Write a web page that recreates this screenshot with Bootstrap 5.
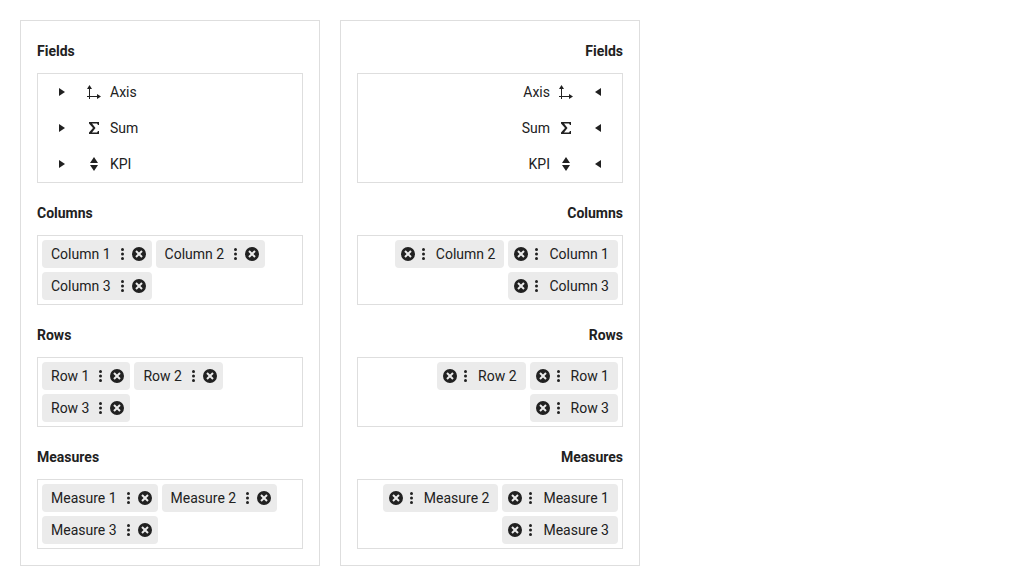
<!DOCTYPE html>
<html lang="en">
<head>
<meta charset="utf-8">
<meta name="viewport" content="width=device-width, initial-scale=1">
<title>Pivot grid configurator</title>
<link href="https://cdn.jsdelivr.net/npm/bootstrap@5.3.0/dist/css/bootstrap.min.css" rel="stylesheet">
<style>
  body { font-family: Roboto, "Liberation Sans", sans-serif; font-size: 14px; line-height: 20px; color: #212121; background: #fff; }
  .page { gap: 20px; padding: 20px; }
  .configurator { flex: 0 1 300px; border: 1px solid #dedede; }
  .heading { font-size: 14px; line-height: 28px; font-weight: 700; }
  .box { border: 1px solid #dedede; }
  .field { height: 36px; padding-inline: 16px; }
  .glyph { display: block; flex: none; width: 16px; height: 16px; fill: currentColor; }
  .plain { padding: 0; border: 0; background: none; color: inherit; }
  .toggle { margin-inline-end: 16px; }
  [dir=rtl] .toggle .glyph { transform: scaleX(-1); }
  .chip { height: 28px; padding-inline: 9px 5px; border-radius: 4px; background: #ebebeb; }
  .chip-label { margin-inline-end: 4px; }
</style>
</head>
<body>
<svg class="d-none" aria-hidden="true">
  <symbol id="caret" viewBox="0 0 16 16"><path d="M5 4v8l6-4z"/></symbol>
  <symbol id="axis" viewBox="0 0 16 16"><path d="M3 5H1l2.500-4L6 5H4v7h7v-2l4 2.500L11 15v-2H4v2H3v-2H1v-1h2z"/></symbol>
  <symbol id="sum" viewBox="0 0 16 16"><path d="M3 2h10v3h-1l-1-1.500H6L9.500 8 6 12.500h5l1-1.500h1v3H3v-1.500L7 8 3 3.500z"/></symbol>
  <symbol id="kpi" viewBox="0 0 16 16"><path d="M8 1l4 6H4zM4 9h8l-4 6z"/></symbol>
  <symbol id="more" viewBox="0 0 16 16"><circle cx="7.500" cy="3.500" r="1.500"/><circle cx="7.500" cy="8" r="1.500"/><circle cx="7.500" cy="12.500" r="1.500"/></symbol>
  <symbol id="remove" viewBox="0 0 16 16"><path fill-rule="evenodd" d="M8 1a7 7 0 1 0 0 14A7 7 0 0 0 8 1zM5.700 4.300 8 6.600l2.300-2.300 1.400 1.400L9.400 8l2.300 2.300-1.400 1.400L8 9.400l-2.300 2.300-1.400-1.400L6.600 8 4.300 5.700z"/></symbol>
</svg>

<main class="page d-flex align-items-start" id="page"></main>

<script src="https://cdn.jsdelivr.net/npm/bootstrap@5.3.0/dist/js/bootstrap.bundle.min.js"></script>
<script>
  const glyph = id => `<svg class="glyph" aria-hidden="true"><use href="#${id}"/></svg>`;

  const field = ([name, icon]) => `
    <li class="field d-flex align-items-center">
      <button type="button" class="plain toggle" aria-label="Expand ${name}">${glyph('caret')}</button>
      <span class="d-flex align-items-center gap-2">${glyph(icon)}<span>${name}</span></span>
    </li>`;

  const chip = name => `
    <li class="chip d-flex align-items-center">
      <span class="chip-label">${name}</span>
      <button type="button" class="plain" aria-label="${name} options">${glyph('more')}</button>
      <button type="button" class="plain" aria-label="Remove ${name}">${glyph('remove')}</button>
    </li>`;

  const group = (title, item) => `
    <section>
      <h2 class="heading mb-2">${title}</h2>
      <ul class="box list-unstyled d-flex flex-wrap gap-1 p-1 mb-0">${[1, 2, 3].map(n => chip(`${item} ${n}`)).join('')}</ul>
    </section>`;

  const configurator = dir => `
    <div class="configurator d-flex flex-column gap-3 p-3" dir="${dir}">
      <section>
        <h2 class="heading mb-2">Fields</h2>
        <ul class="box list-unstyled p-0 mb-0">${[['Axis', 'axis'], ['Sum', 'sum'], ['KPI', 'kpi']].map(field).join('')}</ul>
      </section>
      ${group('Columns', 'Column')}${group('Rows', 'Row')}${group('Measures', 'Measure')}
    </div>`;

  document.getElementById('page').innerHTML = configurator('ltr') + configurator('rtl');
</script>
</body>
</html>
